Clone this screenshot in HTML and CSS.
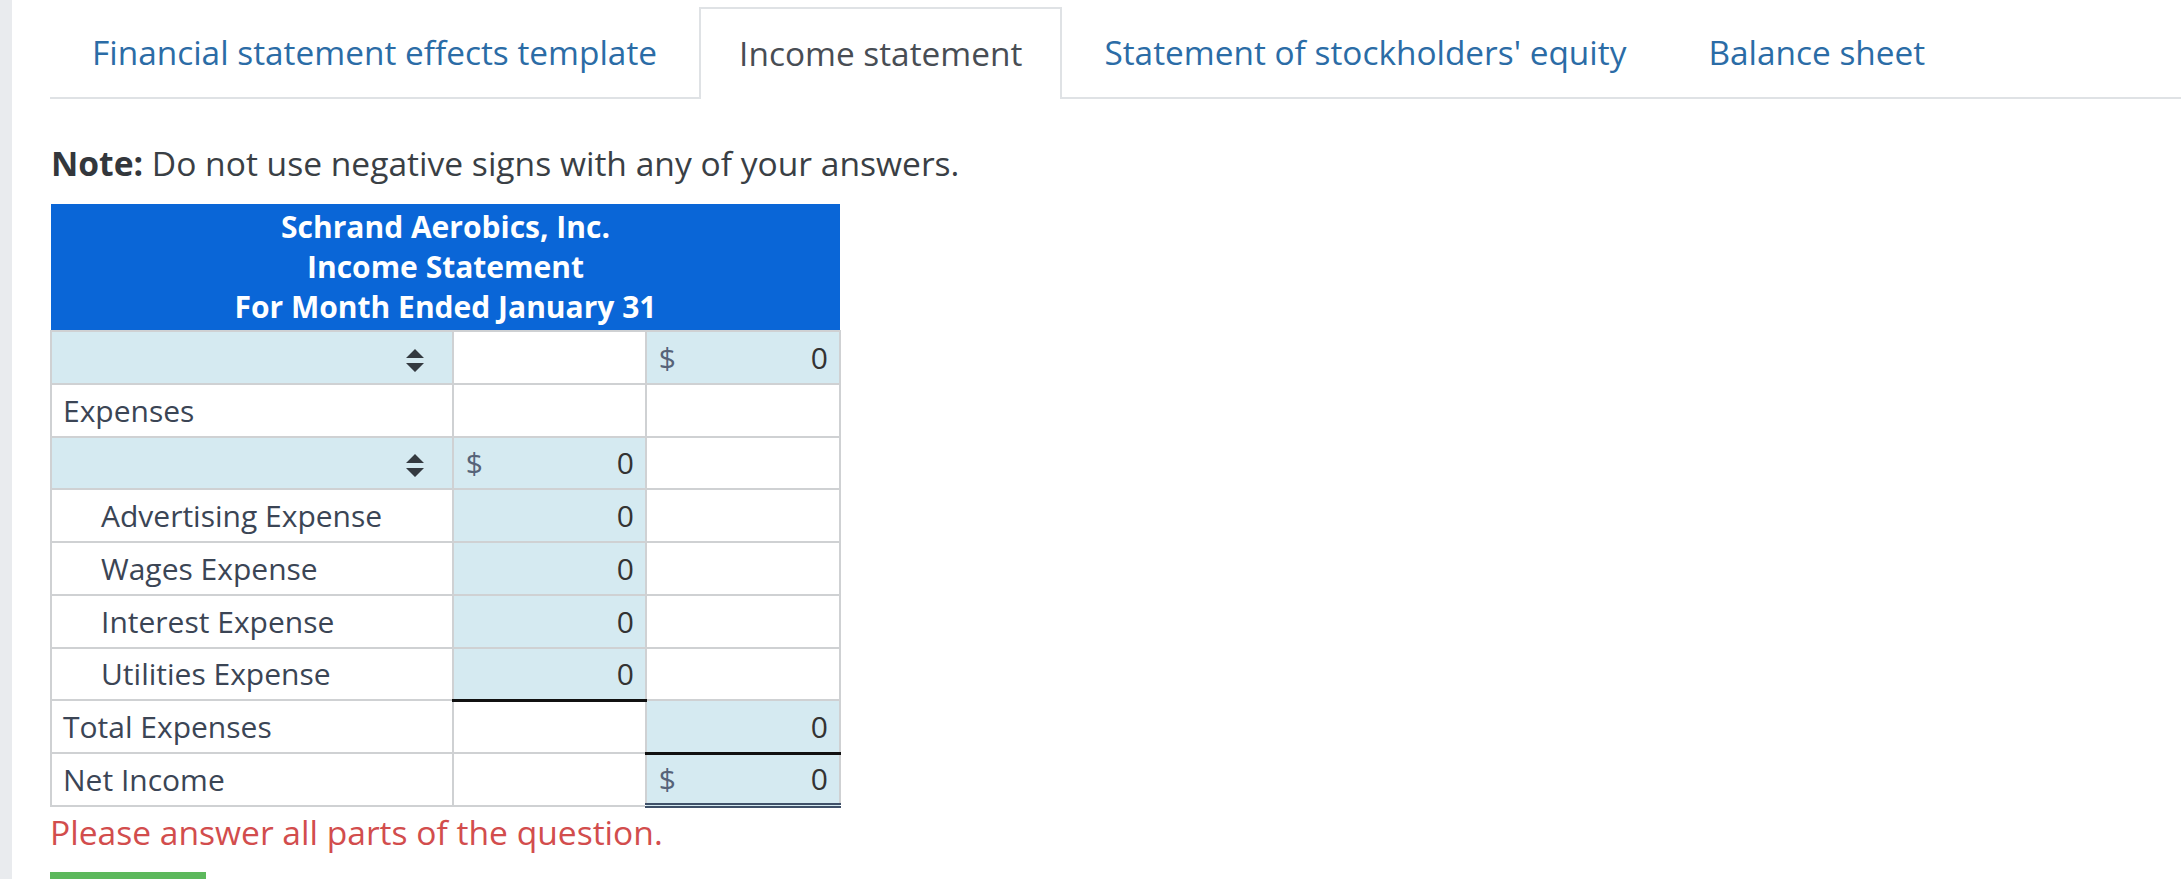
FILE: index.html
```
<!DOCTYPE html>
<html>
<head>
<meta charset="utf-8">
<link rel="stylesheet" href="styles.css">
</head>
<body>
<div class="page">
  <div class="rail"></div>
  <main class="content">
    <nav class="tabs">
      <a class="tab">Financial statement effects template</a>
      <a class="tab active">Income statement</a>
      <a class="tab">Statement of stockholders' equity</a>
      <a class="tab">Balance sheet</a>
    </nav>
    <p class="note"><b>Note:</b> Do not use negative signs with any of your answers.</p>
    <table class="stmt">
      <thead>
        <tr><th colspan="3">Schrand Aerobics, Inc.<br>Income Statement<br>For Month Ended January 31</th></tr>
      </thead>
      <tbody>
        <tr>
          <td class="sel"><svg class="arrows" viewBox="0 0 18 24"><path d="M9 0 L18 9 L0 9 Z M0 14 L18 14 L9 23 Z"/></svg></td>
          <td></td>
          <td class="in"><span class="cur">$</span><span class="num">0</span></td>
        </tr>
        <tr>
          <td class="lbl">Expenses</td>
          <td></td>
          <td></td>
        </tr>
        <tr>
          <td class="sel"><svg class="arrows" viewBox="0 0 18 24"><path d="M9 0 L18 9 L0 9 Z M0 14 L18 14 L9 23 Z"/></svg></td>
          <td class="in"><span class="cur">$</span><span class="num">0</span></td>
          <td></td>
        </tr>
        <tr>
          <td class="lbl sub">Advertising Expense</td>
          <td class="in"><span class="num">0</span></td>
          <td></td>
        </tr>
        <tr>
          <td class="lbl sub">Wages Expense</td>
          <td class="in"><span class="num">0</span></td>
          <td></td>
        </tr>
        <tr>
          <td class="lbl sub">Interest Expense</td>
          <td class="in"><span class="num">0</span></td>
          <td></td>
        </tr>
        <tr>
          <td class="lbl sub">Utilities Expense</td>
          <td class="in single"><span class="num">0</span></td>
          <td></td>
        </tr>
        <tr>
          <td class="lbl">Total Expenses</td>
          <td></td>
          <td class="in single"><span class="num">0</span></td>
        </tr>
        <tr>
          <td class="lbl">Net Income</td>
          <td></td>
          <td class="in double"><span class="cur">$</span><span class="num">0</span></td>
        </tr>
      </tbody>
    </table>
    <p class="error">Please answer all parts of the question.</p>
    <div class="btn"></div>
  </main>
</div>
</body>
</html>
```
FILE: styles.css
```
html, body {
  margin: 0;
  padding: 0;
  background: #fff;
}
body {
  font-family: "Open Sans", "Noto Sans", sans-serif;
  color: #3b4452;
}
.page {
  display: flex;
  min-height: 879px;
}
.rail {
  width: 12px;
  flex: none;
  background: #e9ebee;
}
.content {
  flex: 1;
  padding-left: 38px;
  overflow: hidden;
}
.tabs {
  display: flex;
  margin-top: 7px;
  padding-left: 2px;
  border-bottom: 2px solid #dfe2e5;
  height: 90px;
}
.tab {
  display: flex;
  align-items: center;
  padding: 0 38px 2px 38px;
  margin-right: 2px;
  border: 2px solid transparent;
  border-bottom: none;
  font-size: 33.4px;
  color: #2b6ca6;
  white-space: nowrap;
}
.tab.active {
  border-color: #dfe2e5;
  background: #fff;
  color: #484d54;
  box-sizing: border-box;
  margin-bottom: -2px;
  height: 92px;
}
.note {
  margin: 44px 0 0 1px;
  font-size: 33.6px;
  line-height: 40px;
  color: #3a3f45;
}
.note b {
  font-weight: 700;
  color: #33373c;
}
.stmt {
  margin-top: 21px;
  width: 791px;
  border-collapse: collapse;
  font-size: 30px;
}
.stmt th {
  background: #0a66d7;
  color: #fff;
  font-weight: 700;
  font-size: 30px;
  line-height: 40px;
  padding: 3px 0 3px;
  text-align: center;
}
.stmt td {
  border: 2px solid #cfd1d3;
  height: 52.75px;
  padding: 0 12px;
  box-sizing: border-box;
  white-space: nowrap;
}
.stmt td:nth-child(1) { width: 402px; }
.stmt td:nth-child(2) { width: 194px; }
.stmt td:nth-child(3) { width: 195px; }
.stmt .sel {
  background: #d5eaf1;
  text-align: right;
  padding-right: 28px;
}
.arrows {
  width: 18px;
  height: 24px;
  fill: #343a40;
  vertical-align: middle;
}
.stmt .lbl {
  padding-left: 11px;
  color: #3b4555;
}
.stmt .lbl.sub {
  padding-left: 49px;
}
.stmt .in {
  background: #d5eaf1;
  text-align: right;
  padding-right: 11px;
}
.in .cur {
  float: left;
  color: #566378;
}
.in .num {
  color: #333;
}
.stmt td.single {
  border-bottom: 3px solid #111;
}
.stmt td.double {
  border-bottom: 5px double #3f5068;
}
.error {
  margin: 2px 0 0 0;
  font-size: 33.6px;
  line-height: 44px;
  color: #d24d4d;
}
.btn {
  margin-top: 18px;
  width: 156px;
  height: 30px;
  background: #5cb85c;
}
```
